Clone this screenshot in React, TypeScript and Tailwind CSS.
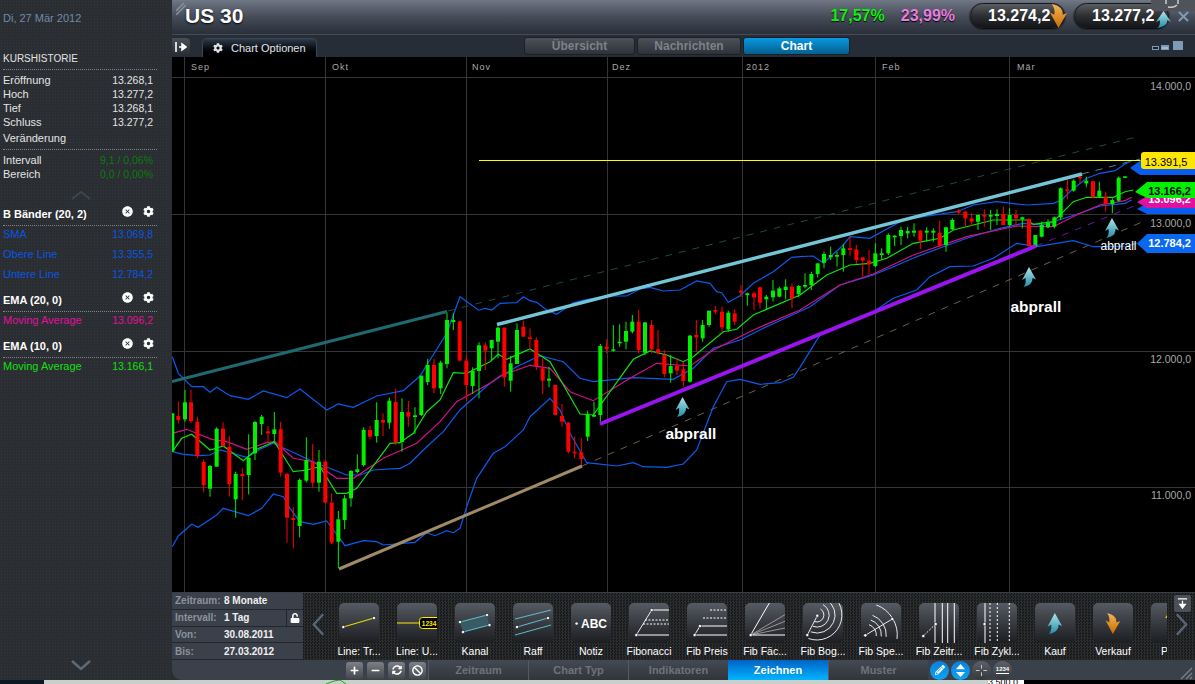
import React from "react";
import { FaBan, FaCog, FaPencilAlt, FaPlus, FaMinus, FaSyncAlt, FaUnlock } from "react-icons/fa";
import { IoCloseCircle } from "react-icons/io5";

type Candle = [number, number, number, number, number, number];

const GREEN = "#00f000";
const RED = "#ff0000";

// values read in zoomed crops: [x, high, bodyTop, bodyBottom, low, up?]
const candlesA: Candle[] = [
  [7, 370, 370, 485, 485, 1], [25, 335, 378, 390, 400, 0], [45, 300, 337, 388, 395, 1], [63, 300, 337, 393, 400, 0],
  [82, 380, 396, 498, 505, 0], [101, 508, 516, 585, 607, 0], [120, 525, 528, 596, 620, 1], [140, 412, 416, 530, 530, 1],
  [159, 397, 416, 468, 470, 0], [178, 438, 470, 582, 620, 0], [197, 545, 552, 628, 683, 1], [217, 535, 552, 558, 630, 0],
  [236, 433, 503, 555, 613, 1], [255, 393, 396, 490, 510, 1], [275, 375, 380, 402, 435, 1], [294, 408, 424, 430, 460, 0],
  [313, 366, 418, 432, 460, 1], [332, 395, 418, 548, 560, 0], [351, 548, 552, 683, 758, 0], [370, 652, 684, 690, 775, 0],
  [389, 565, 570, 708, 742, 1], [409, 442, 510, 572, 577, 1], [428, 462, 516, 578, 592, 0], [447, 480, 515, 578, 605, 1],
  [466, 510, 515, 638, 640, 0], [485, 610, 638, 758, 763, 0], [505, 663, 688, 755, 835, 1], [524, 615, 625, 690, 718, 1],
  [543, 540, 543, 625, 650, 1], [562, 493, 538, 546, 550, 1], [581, 412, 420, 525, 530, 1], [600, 408, 420, 440, 448, 0],
  [620, 337, 390, 438, 458, 1], [639, 370, 390, 398, 438, 0], [658, 323, 332, 398, 416, 1], [677, 296, 336, 458, 465, 0],
  [696, 325, 366, 456, 485, 1], [715, 333, 366, 380, 410, 0], [735, 352, 376, 381, 432, 1], [754, 257, 257, 375, 378, 1],
  [773, 207, 225, 276, 285, 1], [792, 207, 225, 295, 310, 0], [812, 212, 218, 295, 312, 1], [831, 68, 90, 222, 235, 1],
  [850, 70, 90, 96, 120, 1], [869, 92, 94, 212, 212, 0], [889, 195, 212, 285, 332, 0], [908, 232, 243, 288, 312, 1],
  [927, 157, 166, 243, 325, 1], [946, 157, 166, 182, 240, 0],
];
const candlesB: Candle[] = [
  [35, 150, 150, 175, 212, 1], [54, 110, 113, 155, 205, 1], [73, 113, 113, 262, 290, 0], [92, 198, 220, 272, 305, 1],
  [111, 100, 120, 222, 222, 1], [130, 92, 110, 140, 140, 0], [150, 115, 142, 147, 180, 0], [169, 142, 150, 228, 240, 0],
  [188, 205, 235, 272, 312, 0], [207, 230, 266, 272, 292, 1], [226, 285, 285, 375, 375, 0], [246, 342, 378, 395, 410, 0],
  [265, 395, 398, 485, 490, 0], [284, 440, 485, 490, 505, 0], [304, 445, 487, 507, 525, 0], [323, 362, 375, 440, 453, 1],
  [342, 335, 375, 380, 380, 1], [361, 162, 168, 375, 395, 1], [380, 148, 170, 177, 190, 0], [400, 105, 178, 182, 185, 1],
  [419, 103, 155, 160, 170, 1], [438, 95, 123, 155, 178, 1], [457, 75, 95, 125, 130, 1], [476, 60, 95, 180, 190, 0],
  [495, 97, 97, 188, 195, 1], [515, 90, 105, 178, 190, 0], [534, 120, 178, 190, 190, 0], [553, 180, 195, 252, 262, 0],
  [572, 195, 228, 250, 278, 1], [591, 205, 228, 242, 255, 0], [610, 215, 238, 273, 290, 0], [630, 135, 137, 275, 278, 1],
  [649, 90, 135, 142, 185, 0], [668, 90, 105, 145, 155, 1], [687, 62, 62, 105, 110, 1], [706, 48, 60, 65, 72, 0],
  [726, 50, 65, 112, 125, 0], [745, 62, 68, 118, 125, 1], [764, 58, 70, 95, 105, 0], [783, -15, 2, 8, 21, 0],
  [802, 8, 10, 15, 47, 1], [822, 5, 10, 22, 60, 0],
];
const candlesC: Candle[] = [
  [0, 350, 352, 398, 415, 0], [19, 375, 380, 388, 418, 1], [39, 330, 362, 382, 395, 1], [58, 350, 355, 380, 382, 1],
  [77, 328, 350, 360, 388, 1], [96, 340, 350, 385, 415, 0], [116, 345, 348, 372, 382, 1], [135, 310, 345, 350, 355, 1],
  [154, 305, 312, 345, 360, 1], [173, 280, 280, 312, 322, 1], [192, 245, 252, 278, 295, 1], [212, 230, 255, 262, 270, 1],
  [231, 245, 255, 260, 290, 1], [250, 222, 235, 255, 305, 1], [270, 198, 235, 240, 257, 0], [289, 225, 238, 270, 282, 0],
  [308, 262, 262, 272, 318, 0], [327, 240, 272, 283, 312, 0], [346, 220, 250, 288, 292, 1], [365, 235, 250, 255, 268, 1],
  [385, 190, 195, 250, 255, 1], [404, 195, 197, 202, 228, 1], [423, 170, 180, 198, 225, 1], [443, 170, 183, 190, 205, 1],
  [462, 160, 182, 188, 200, 1], [481, 180, 182, 212, 238, 0], [500, 172, 182, 188, 215, 1], [520, 175, 182, 188, 215, 1],
  [539, 152, 188, 228, 230, 0], [558, 170, 172, 225, 245, 1], [577, 145, 150, 178, 180, 1], [596, 117, 122, 128, 132, 0],
  [616, 122, 125, 145, 168, 0], [635, 130, 145, 155, 168, 0], [654, 133, 135, 155, 180, 1], [673, 118, 135, 140, 170, 0],
  [692, 120, 135, 140, 180, 1], [711, 118, 132, 138, 165, 1],
];
const candlesD: Candle[] = [
  [10, 200, 222, 255, 255, 0], [29, 205, 225, 255, 260, 1], [48, 210, 225, 235, 260, 0], [67, 230, 232, 238, 265, 1],
  [87, 235, 237, 318, 320, 0], [106, 285, 285, 318, 322, 1], [125, 245, 255, 290, 292, 1], [144, 238, 248, 262, 265, 1],
  [163, 230, 232, 260, 265, 1], [182, 142, 145, 232, 240, 1], [202, 120, 148, 152, 178, 0], [221, 118, 122, 152, 155, 1],
  [240, 105, 110, 115, 130, 0], [259, 110, 122, 130, 142, 1], [279, 122, 124, 172, 175, 0], [298, 125, 152, 170, 170, 1],
  [317, 155, 170, 192, 215, 0], [337, 175, 180, 192, 220, 1], [356, 110, 113, 182, 185, 1], [375, 109, 109, 113, 113, 1],
];

const toPage = (x0: number, y0: number, list: Candle[]) =>
  list.map(([x, h, t, b, l, up]) => ({ x: x0 + x / 3, h: y0 + h / 3, t: y0 + t / 3, b: y0 + b / 3, l: y0 + l / 3, up }));

const allCandles = [
  ...toPage(170, 290, candlesA),
  ...toPage(480, 290, candlesB),
  ...toPage(760, 170, candlesC),
  ...toPage(1000, 140, candlesD),
];

const seg = (x0: number, y0: number, v: number[]) => {
  const out: string[] = [];
  for (let i = 0; i < v.length; i += 2) out.push(`${(x0 + v[i] / 3).toFixed(1)},${(y0 + v[i + 1] / 3).toFixed(1)}`);
  return out.join(" ");
};

const upperBand = [
  seg(170, 290, [7, 200, 25, 250, 65, 290, 100, 290, 120, 307, 140, 292, 180, 317, 235, 328, 280, 303, 350, 323, 390, 297, 470, 360, 505, 342, 550, 352, 620, 318, 700, 302, 750, 258, 830, 130, 870, 20, 925, 60]),
  seg(480, 225, [0, 255, 15, 250, 35, 255, 60, 235, 110, 233, 130, 215, 150, 227, 170, 232, 200, 255, 230, 268, 280, 233, 320, 224, 380, 213, 440, 213, 480, 192, 510, 187, 550, 198, 600, 195, 650, 168, 690, 175, 710, 200, 725, 203, 745, 232, 780, 212, 820, 175, 880, 140, 935, 97, 960, 95]),
  seg(760, 170, [160, 258, 190, 280, 250, 225, 270, 200, 330, 205, 430, 150, 490, 140, 590, 125, 640, 105, 710, 95, 800, 105, 880, 100]),
  seg(1000, 140, [185, 180, 215, 150, 260, 115, 300, 100, 345, 92, 375, 72, 400, 60]),
].join(" ");

const lowerBand = [
  seg(170, 290, [7, 770, 25, 738, 65, 703, 85, 712, 140, 675, 160, 655, 235, 677, 275, 655, 310, 612, 340, 620, 360, 655, 390, 695, 430, 703, 470, 693, 490, 720, 525, 767, 580, 752, 620, 755, 640, 765, 735, 757, 770, 728, 795, 737, 830, 722, 850, 728, 870, 715, 890, 650, 920, 565]),
  seg(480, 290, [40, 490, 75, 470, 130, 420, 150, 380, 210, 325, 240, 360, 270, 430, 320, 518, 410, 528, 460, 518, 490, 530, 560, 532, 610, 522, 650, 480, 700, 350, 740, 275, 780, 268, 840, 283, 900, 278, 940, 262, 960, 232]),
  seg(760, 170, [180, 495, 285, 450, 340, 425, 400, 385, 470, 360, 510, 320, 570, 290, 640, 288, 700, 265, 770, 220, 830, 230, 940, 212]),
  seg(1000, 140, [280, 320, 330, 320, 380, 318, 410, 310]),
].join(" ");

const smaLine = [
  seg(170, 290, [7, 485, 40, 493, 90, 497, 120, 495, 150, 480, 230, 502, 270, 478, 310, 460, 380, 492, 430, 515, 530, 555, 570, 555, 610, 540, 690, 535, 720, 520, 770, 470, 820, 425, 870, 360, 960, 280]),
  seg(480, 290, [60, 260, 110, 230, 180, 197, 250, 215, 300, 265, 340, 275, 460, 263, 580, 268, 640, 235, 700, 175, 780, 150, 850, 115]),
  seg(760, 170, [150, 410, 240, 345, 340, 315, 400, 290, 470, 260, 550, 230, 620, 205, 720, 175, 790, 160, 850, 165, 880, 155, 960, 130]),
  seg(1000, 140, [300, 198, 375, 190, 395, 180]),
].join(" ");

const ema20 = [
  seg(170, 290, [7, 430, 50, 418, 125, 448, 170, 455, 230, 478, 290, 458, 315, 455, 370, 505, 430, 515, 500, 565, 550, 565, 640, 505, 740, 460, 810, 395, 860, 335, 960, 280]),
  seg(480, 290, [60, 258, 150, 226, 210, 235, 270, 305, 340, 332, 450, 265, 530, 220, 630, 228, 700, 180, 820, 120, 960, 60]),
  seg(760, 170, [240, 345, 340, 312, 460, 255, 620, 200, 770, 168, 850, 170, 880, 170, 960, 130]),
  seg(1000, 140, [300, 195, 375, 182, 395, 172]),
].join(" ");

const ema10 = [
  seg(170, 290, [7, 485, 35, 445, 65, 433, 120, 480, 160, 468, 220, 512, 260, 478, 313, 455, 370, 545, 410, 540, 450, 530, 500, 610, 530, 610, 560, 595, 660, 460, 690, 458, 730, 430, 770, 365, 810, 330, 850, 248, 890, 250, 960, 215]),
  seg(480, 290, [55, 193, 80, 208, 150, 177, 210, 215, 300, 372, 340, 375, 460, 208, 510, 183, 560, 195, 610, 215, 640, 200, 730, 125, 770, 118, 820, 75, 960, 15]),
  seg(760, 170, [120, 375, 200, 315, 270, 285, 330, 280, 380, 265, 460, 220, 540, 205, 580, 180, 700, 150, 800, 150, 820, 163, 880, 155]),
  seg(1000, 140, [220, 185, 260, 172, 340, 172, 375, 155, 400, 150]),
].join(" ");

const ARROW_UP = "M7 0 L14 12.5 L10.5 11 Q11 18 1.5 20 Q4.5 16 3.5 11 L0 13 Z";
const ARROW_DOWN = "M7 20 L14 7.5 L10.5 9 Q11 2 1.5 0 Q4.5 4 3.5 9 L0 7 Z";

function ChartGrid() {
  return (
    <g stroke="#353535" strokeWidth="1">
      {[184.5, 325.5, 466.5, 607.5, 742.5, 875.5, 1009.5].map((x) => (
        <line key={x} x1={x} y1="57" x2={x} y2="592" />
      ))}
      {[77.5, 214.5, 351.5, 487.5].map((y) => (
        <line key={y} x1="172" y1={y} x2="1195" y2={y} />
      ))}
    </g>
  );
}

function Chart() {
  return (
    <svg viewBox="172 57 1023 535" className="block w-[1023px] h-[535px] bg-black">
      <defs>
        <linearGradient id="tealFill" x1="0" y1="0" x2="0" y2="1">
          <stop offset="0" stopColor="#b4e2ea" />
          <stop offset="1" stopColor="#1f8ea8" />
        </linearGradient>
        <linearGradient id="orangeFill" x1="0" y1="0" x2="0" y2="1">
          <stop offset="0" stopColor="#f6b654" />
          <stop offset="1" stopColor="#c96a00" />
        </linearGradient>
      </defs>
      <ChartGrid />
      <g fontSize="9" fill="#a8a8a8" letterSpacing="1">
        <text x="191" y="70">Sep</text>
        <text x="332" y="70">Okt</text>
        <text x="472" y="70">Nov</text>
        <text x="612" y="70">Dez</text>
        <text x="746" y="70">2012</text>
        <text x="882" y="70">Feb</text>
        <text x="1017" y="70">Mär</text>
      </g>

      {/* dashed channel extensions */}
      <g strokeWidth="1" strokeDasharray="7 7" fill="none">
        <line x1="448" y1="311" x2="1140" y2="136" stroke="#1d4a4c" />
        <line x1="1082" y1="174" x2="1140" y2="159" stroke="#4c8a96" />
        <line x1="582" y1="466" x2="1142" y2="222" stroke="#6e604a" />
        <line x1="1036" y1="246" x2="1134" y2="206" stroke="#6a16a8" />
      </g>

      <polyline points={lowerBand} fill="none" stroke="#0a5cf0" strokeWidth="1.2" />
      <polyline points={upperBand} fill="none" stroke="#0a5cf0" strokeWidth="1.2" />
      <polyline points={smaLine} fill="none" stroke="#0a5cf0" strokeWidth="1.2" />
      <polyline points={ema20} fill="none" stroke="#d4108c" strokeWidth="1.2" />
      <polyline points={ema10} fill="none" stroke="#10e010" strokeWidth="1.2" />

      {allCandles.map((c, i) => (
        <g key={i} fill={c.up ? GREEN : RED}>
          <rect x={c.x - 0.5} y={c.h} width="1" height={c.l - c.h} />
          <rect x={c.x - 2} y={c.t} width="4" height={Math.max(c.b - c.t, 1.5)} />
        </g>
      ))}

      {/* drawn trend lines */}
      <line x1="172" y1="381.5" x2="447" y2="311.5" stroke="#1f6a70" strokeWidth="3" />
      <line x1="497" y1="324.5" x2="1082" y2="174" stroke="#74c6d6" strokeWidth="3.4" />
      <line x1="339" y1="569" x2="582" y2="466" stroke="#a08a68" strokeWidth="3" />
      <line x1="600" y1="424" x2="1036" y2="246" stroke="#9a14f0" strokeWidth="4" />
      <line x1="479" y1="160.5" x2="1141" y2="160.5" stroke="#ffff00" strokeWidth="1" />

      {/* rebound markers */}
      <path d={ARROW_UP} transform="translate(675.5 397)" fill="url(#tealFill)" />
      <path d={ARROW_UP} transform="translate(1022 267)" fill="url(#tealFill)" />
      <path d={ARROW_UP} transform="translate(1105 218)" fill="url(#tealFill)" />
      <g fill="#fff" fontSize="15.5" fontWeight="700">
        <text x="665.5" y="438.5">abprall</text>
        <text x="1010.5" y="312">abprall</text>
      </g>
      <text x="1100.5" y="249.5" fill="#fff" fontSize="12">abprall</text>

      {/* price axis */}
      <g fontSize="10.5" fill="#a8a8a8" textAnchor="end">
        <text x="1191" y="90">14.000,0</text>
        <text x="1191" y="226.5">13.000,0</text>
        <text x="1191" y="363">12.000,0</text>
        <text x="1191" y="499">11.000,0</text>
      </g>

      {/* price tags */}
      <polygon points="1130,168 1141,160 1195,160 1195,175 1140,175" fill="#0a5cf0" />
      <polygon points="1137,209 1147,203 1195,203 1195,214 1147,214" fill="#0a5cf0" />
      <polygon points="1137,202 1147,196 1195,196 1195,208 1147,208" fill="#e010a0" />
      <text x="1191" y="203" fontSize="11" fontWeight="700" fill="#fff" textAnchor="end">13.096,2</text>
      <polygon points="1135,192 1147,182 1195,182 1195,198 1147,198" fill="#00f000" />
      <text x="1191" y="194.5" fontSize="11" fontWeight="700" fill="#000" textAnchor="end">13.166,2</text>
      <rect x="1141" y="152" width="56" height="17" rx="3" fill="#ffe600" />
      <text x="1187.5" y="165.5" fontSize="11" fill="#000" textAnchor="end">13.391,5</text>
      <polygon points="1137,243.5 1147,234 1195,234 1195,253 1147,253" fill="#0a68f0" />
      <text x="1191" y="246.5" fontSize="11" fontWeight="700" fill="#fff" textAnchor="end">12.784,2</text>
    </svg>
  );
}

function Dots() {
  return <div className="w-[154px] border-t border-dotted border-[#80858c]" />;
}

function Row({ label, value, color = "text-[#e4e4e4]", valueColor, className = "" }: { label: string; value?: string; color?: string; valueColor?: string; className?: string }) {
  return (
    <div className={`flex justify-between w-[150px] h-[14px] leading-[14px] text-[11px] ${color} ${className}`}>
      <span>{label}</span>
      {value && <span className={`text-[10.5px] ${valueColor || ""}`}>{value}</span>}
    </div>
  );
}

function IndicatorHead({ title, className = "" }: { title: string; className?: string }) {
  return (
    <div className={`flex items-center w-[151px] h-[14px] leading-[14px] text-[11px] font-bold text-white ${className}`}>
      <span>{title}</span>
      <span className="ml-auto flex items-center gap-[9px] -translate-y-[3px]">
        <IoCloseCircle className="w-[13px] h-[13px] text-white" />
        <FaCog className="w-[11px] h-[11px] text-white" />
      </span>
    </div>
  );
}

function Sidebar() {
  return (
    <aside className="w-[172px] h-[680px] flex-none flex flex-col pl-[3px] pt-[11px] bg-[#2a2d32] bg-[radial-gradient(#34383e_1px,transparent_1px)] bg-[length:3px_3px]">
      <div className="h-[14px] leading-[14px] text-[11px] text-[#6f8ba8]">Di, 27 Mär 2012</div>
      <div className="h-[14px] leading-[14px] mt-[27px] text-[10px] text-[#e4e4e4]">KURSHISTORIE</div>
      <div className="mt-[3px]"><Dots /></div>
      <Row className="mt-[3px]" label="Eröffnung" value="13.268,1" />
      <Row label="Hoch" value="13.277,2" />
      <Row label="Tief" value="13.268,1" />
      <Row label="Schluss" value="13.277,2" />
      <Row className="mt-[2px]" label="Veränderung" />
      <div className="mt-[4px]"><Dots /></div>
      <Row className="mt-[3px]" label="Intervall" value="9,1 / 0,06%" valueColor="text-[#0c7a10]" />
      <Row label="Bereich" value="0,0 / 0,00%" valueColor="text-[#0c7a10]" />
      <svg viewBox="0 0 20 10" className="w-[20px] h-[10px] mt-[9px] ml-[68px]">
        <path d="M1 9 L10 2 L19 9" fill="none" stroke="#3d4550" strokeWidth="2" />
      </svg>
      <IndicatorHead className="mt-[7px]" title="B Bänder (20, 2)" />
      <div className="mt-[4px]"><Dots /></div>
      <Row className="mt-[1px]" color="text-[#0a56e0]" label="SMA" value="13.069,8" />
      <Row className="mt-[6px]" color="text-[#0a56e0]" label="Obere Line" value="13.355,5" />
      <Row className="mt-[6px]" color="text-[#0a56e0]" label="Untere Line" value="12.784,2" />
      <IndicatorHead className="mt-[12px]" title="EMA (20, 0)" />
      <div className="mt-[4px]"><Dots /></div>
      <Row className="mt-[1px]" color="text-[#e0109c]" label="Moving Average" value="13.096,2" />
      <IndicatorHead className="mt-[12px]" title="EMA (10, 0)" />
      <div className="mt-[4px]"><Dots /></div>
      <Row className="mt-[1px]" color="text-[#10e010]" label="Moving Average" value="13.166,1" />
      <svg viewBox="0 0 20 12" className="w-[20px] h-[12px] mt-auto mb-[9px] ml-[68px]">
        <path d="M1 2 L10 10 L19 2" fill="none" stroke="#5d6b7a" strokeWidth="2.4" />
      </svg>
    </aside>
  );
}

function QuotePill({ value, arrow, fill, arrowClass, className }: { value: string; arrow: string; fill: string; arrowClass: string; className: string }) {
  return (
    <div className={`relative h-[25px] rounded-full border border-[#15171a] bg-gradient-to-b from-[#5a5d62] via-[#2e3033] to-[#141518] flex items-center text-white font-bold text-[16px] shadow-[0_1px_2px_#000] ${className}`}>
      <span className="ml-[17px]">{value}</span>
      <svg viewBox="0 0 14 20" preserveAspectRatio="none" className={`absolute ${arrowClass}`}>
        <path d={arrow} fill={fill} />
      </svg>
    </div>
  );
}

function Header() {
  return (
    <header className="relative h-[35px] flex-none flex items-center pb-[3px] border-b border-[#454c58] bg-gradient-to-b from-[#707785] via-[#454b57] to-[#2a303a]">
      <svg viewBox="0 0 10 12" className="absolute left-[4px] top-[3px] w-[10px] h-[12px]">
        <path d="M0 8 L8 0 M0 12 L10 2" stroke="#8b93a2" strokeWidth="1.4" />
      </svg>
      <span className="ml-[13px] text-[21px] font-bold text-white [text-shadow:0_1px_2px_#000]">US 30</span>
      <div className="ml-auto flex items-center">
        <span className="text-[16px] font-bold text-[#12f012] [text-shadow:0_1px_1px_#000]">17,57%</span>
        <span className="ml-[16px] text-[16px] font-bold text-[#e87fe0] [text-shadow:0_1px_1px_#000]">23,99%</span>
        <QuotePill className="ml-[15px] w-[95px]" value="13.274,2" arrow={ARROW_DOWN} fill="url(#orangeFill)" arrowClass="right-[-3px] top-[0px] w-[17px] h-[24px]" />
        <QuotePill className="ml-[9px] w-[95px]" value="13.277,2" arrow={ARROW_UP} fill="url(#tealFill)" arrowClass="right-[-3px] top-[7px] w-[15px] h-[17px]" />
        <svg viewBox="0 0 12 12" className="ml-[9px] mr-[6px] w-[11px] h-[11px] translate-y-[1px]">
          <path d="M1 1 L11 11 M11 1 L1 11" stroke="#7f9bb4" strokeWidth="2.2" />
        </svg>
      </div>
      <div className="absolute right-0 top-0 w-[44px] h-[11px] bg-[#50545a] rounded-bl-sm flex items-start justify-center">
        <svg viewBox="0 0 20 8" className="w-[20px] h-[8px]">
          <path d="M3 0 V4 M15 0 V4 M5 7 Q11 8 14 5" fill="none" stroke="#c4c8cc" strokeWidth="1.6" />
        </svg>
      </div>
    </header>
  );
}

function TopTab({ label, active, className = "" }: { label: string; active?: boolean; className?: string }) {
  return (
    <div className={`h-[18px] rounded-[3px] border border-[#1c2026] flex items-center justify-center text-[12px] font-bold ${active ? "bg-gradient-to-b from-[#0a98e0] to-[#04608f] text-white" : "bg-gradient-to-b from-[#4c515a] to-[#2e3238] text-[#7c828a]"} ${className}`}>
      {label}
    </div>
  );
}

function TabRow() {
  return (
    <div className="h-[22px] flex-none flex items-start bg-[#272d37]">
      <div className="mt-[3px] w-[18px] h-[17px] rounded-r-[4px] bg-gradient-to-b from-[#4a4e56] to-[#2a2d33] flex items-center justify-center">
        <svg viewBox="0 0 12 10" className="w-[12px] h-[10px]">
          <path d="M1 0 V10 M4 5 H8 M7 2 L11 5 L7 8 Z" stroke="#fff" strokeWidth="1.6" fill="#fff" />
        </svg>
      </div>
      <div className="ml-[12px] mt-[3px] w-[115px] h-[19px] rounded-t-[5px] border-t border-x border-[#3a4656] bg-gradient-to-b from-[#2e3a4a] to-black flex items-center text-[11px] text-[#e4e4e4]">
        <FaCog className="ml-[10px] mr-[8px] w-[10px] h-[10px]" />
        Chart Optionen
      </div>
      <div className="ml-[207px] mt-[2px] flex gap-[2px]">
        <TopTab className="w-[111px]" label="Übersicht" />
        <TopTab className="w-[104px]" label="Nachrichten" />
        <TopTab className="w-[107px]" label="Chart" active />
      </div>
      <div className="ml-auto mr-[12px] mt-[5px] h-[10px] flex items-end gap-[2px]">
        <div className="w-[7px] h-[4px] border border-[#7a9ab8] bg-[#1c2028]" />
        <div className="w-[8px] h-[5px] border-t-2 border-x border-b border-[#7a9ab8] bg-[#a0bcd4]" />
        <div className="ml-[2px] w-[10px] h-[9px] border-t-2 border-x border-b border-[#7a9ab8] bg-[#7f9ab4]" />
      </div>
    </div>
  );
}

function InfoRow({ label, value, children }: { label: string; value: string; children?: React.ReactNode }) {
  return (
    <div className="flex-1 flex items-center border-b border-[#23272c] bg-[#3b414b] pl-[3px] text-[10px] font-bold">
      <span className="w-[49px] text-[#8a929c]">{label}</span>
      <span className="text-[#f0f0f0]">{value}</span>
      {children}
    </div>
  );
}

const dot = (cx: number, cy: number) => <circle cx={cx} cy={cy} r="1.6" fill="#fff" stroke="#111" strokeWidth="0.5" />;

const toolIcons: Record<string, React.ReactNode> = {
  line: <>
    <line x1="4.3" y1="24" x2="35" y2="15" stroke="#e6d800" strokeWidth="1.2" />
    {dot(4.3, 24)}{dot(35, 15)}
  </>,
  horiz: <>
    <line x1="0" y1="20" x2="22" y2="20" stroke="#ffea00" strokeWidth="1.2" />
    <rect x="22.5" y="14.5" width="22" height="11" rx="3" fill="#000" stroke="#ffea00" strokeWidth="1" />
    <text x="24.8" y="22.5" fontSize="6.5" fontWeight="700" fill="#ffea00">1234</text>
  </>,
  channel: <>
    <polygon points="5,19 32,12 34.5,22 8,29" fill="#3a5a66" />
    <line x1="5" y1="19" x2="32" y2="12" stroke="#5bbfd0" strokeWidth="1" />
    <line x1="8" y1="29" x2="34.5" y2="22" stroke="#5bbfd0" strokeWidth="1" />
    {dot(5, 19)}{dot(32, 12)}{dot(34.5, 22)}{dot(8, 29)}
  </>,
  raff: <>
    <line x1="2" y1="16" x2="38" y2="7" stroke="#5bbfd0" strokeWidth="1" />
    <line x1="4" y1="24" x2="35" y2="15" stroke="#5bbfd0" strokeWidth="1" />
    <line x1="2" y1="32" x2="38" y2="22" stroke="#5bbfd0" strokeWidth="1" />
    {dot(4, 24)}{dot(35, 15)}
  </>,
  note: <>
    {dot(5.6, 20.5)}
    <text x="10" y="25" fontSize="12" fontWeight="700" fill="#fff">ABC</text>
  </>,
  fib: <>
    <line x1="22.7" y1="7" x2="7.3" y2="32" stroke="#fff" strokeWidth="0.9" />
    <line x1="22.7" y1="7" x2="40" y2="7" stroke="#fff" strokeWidth="1" />
    <line x1="16" y1="17" x2="40" y2="17" stroke="#fff" strokeDasharray="2 1.5" />
    <line x1="14" y1="21" x2="40" y2="21" stroke="#fff" strokeDasharray="2 1.5" />
    <line x1="7.3" y1="32" x2="40" y2="32" stroke="#fff" strokeWidth="1" />
    {dot(22.7, 7)}{dot(7.3, 32)}
  </>,
  fibPrice: <>
    <line x1="13" y1="23" x2="7.6" y2="32" stroke="#fff" strokeWidth="0.9" />
    <line x1="23" y1="7" x2="40" y2="7" stroke="#fff" strokeDasharray="2 1.5" />
    <line x1="16" y1="15" x2="40" y2="15" stroke="#fff" strokeDasharray="2 1.5" />
    <line x1="13" y1="23" x2="40" y2="23" stroke="#fff" strokeWidth="1" />
    <line x1="7.6" y1="32" x2="40" y2="32" stroke="#fff" strokeWidth="1" />
    {dot(13, 23)}{dot(7.6, 32)}
  </>,
  fibFan: <>
    <line x1="5.7" y1="32" x2="24.3" y2="0" stroke="#fff" strokeWidth="1" />
    <line x1="5.7" y1="32" x2="40" y2="11.7" stroke="#999" strokeWidth="1" />
    <line x1="5.7" y1="32" x2="40" y2="18.3" stroke="#999" strokeWidth="1" />
    <line x1="5.7" y1="32" x2="40" y2="25" stroke="#999" strokeWidth="1" />
    <line x1="5.7" y1="32" x2="40" y2="32" stroke="#fff" strokeWidth="1" />
    {dot(5.7, 32)}
  </>,
  fibArc: <>
    <g fill="none" stroke="#fff" strokeWidth="0.9">
      <path d="M17.5 6 A7 7 0 0 1 11.6 18.6" />
      <path d="M20 1.6 A12 12 0 0 1 9.9 23.3" />
      <path d="M23 -3.6 A18 18 0 0 1 7.8 28.9" />
      <path d="M26.5 -9.6 A25 25 0 0 1 5.4 35.5" />
    </g>
    <line x1="14.3" y1="12.7" x2="4.3" y2="32" stroke="#fff" strokeWidth="0.9" />
    {dot(14.3, 12.7)}{dot(4.3, 32)}
  </>,
  fibSpeed: <>
    <g fill="none" stroke="#fff" strokeWidth="0.9">
      <path d="M8 21.7 A11 11 0 0 1 15.3 33" />
      <path d="M9.8 17 A16 16 0 0 1 20.3 33.4" />
      <path d="M11.5 12.3 A21 21 0 0 1 25.2 33.8" />
      <path d="M15.2 1.9 A32 32 0 0 1 36 36" />
    </g>
    <line x1="31.3" y1="16" x2="4.3" y2="32.3" stroke="#fff" strokeWidth="0.9" />
    {dot(31.3, 16)}{dot(4.3, 32.3)}
  </>,
  fibTime: <>
    {[16, 23.3, 28.7, 35.3].map((x) => <line key={x} x1={x} y1="0" x2={x} y2="40" stroke="#fff" strokeWidth="1" />)}
    <line x1="16.7" y1="21" x2="4.3" y2="33" stroke="#fff" strokeWidth="0.9" strokeDasharray="2 1.5" />
    {dot(16.7, 21)}{dot(4.3, 33)}
  </>,
  fibCycle: <>
    <line x1="8" y1="0" x2="8" y2="40" stroke="#fff" strokeWidth="1" />
    {[13, 20.3, 32.3].map((x) => <line key={x} x1={x} y1="0" x2={x} y2="40" stroke="#fff" strokeDasharray="2 2" />)}
    {dot(7.5, 21)}
  </>,
  buy: <path d={ARROW_UP} transform="translate(12.5 10) scale(1.05)" fill="url(#tealFill)" />,
  sell: <path d={ARROW_DOWN} transform="translate(12.5 10) scale(1.05)" fill="url(#orangeFill)" />,
  more: <polygon points="14,15 17,10 20,15" fill="#e6c800" />,
};

const tools = [
  ["line", "Line: Tr..."], ["horiz", "Line: U..."], ["channel", "Kanal"], ["raff", "Raff"], ["note", "Notiz"],
  ["fib", "Fibonacci"], ["fibPrice", "Fib Preis"], ["fibFan", "Fib Fäc..."], ["fibArc", "Fib Bog..."], ["fibSpeed", "Fib Spe..."],
  ["fibTime", "Fib Zeitr..."], ["fibCycle", "Fib Zykl..."], ["buy", "Kauf"], ["sell", "Verkauf"], ["more", "P"],
];

function ToolTile({ icon, label }: { icon: string; label: string }) {
  return (
    <div className="w-[40px] flex-none flex flex-col items-center">
      <div className="w-[40px] h-[40px] rounded-[5px] bg-gradient-to-b from-[#565a62] via-[#383b41] to-[#1c1e22] overflow-hidden">
        <svg viewBox="0 0 40 40" className="w-[40px] h-[40px]">{toolIcons[icon]}</svg>
      </div>
      <div className={`mt-[1px] h-[14px] leading-[14px] text-[10.5px] text-white whitespace-nowrap ${icon === "more" ? "self-start ml-[10px]" : ""}`}>{label}</div>
    </div>
  );
}

function SquareBtn({ children }: { children: React.ReactNode }) {
  return (
    <div className="w-[17px] h-[17px] rounded-[3px] bg-gradient-to-b from-[#7d8186] to-[#43474d] flex items-center justify-center text-white">
      {children}
    </div>
  );
}

function RoundBtn({ blue, children }: { blue?: boolean; children: React.ReactNode }) {
  return (
    <div className={`w-[19px] h-[19px] rounded-full flex items-center justify-center text-white ${blue ? "bg-gradient-to-b from-[#0a80d8] to-[#10a4f4]" : "bg-gradient-to-b from-[#5e6268] to-[#34373c]"}`}>
      {children}
    </div>
  );
}

function BottomTab({ label, active }: { label: string; active?: boolean }) {
  return (
    <div className={`w-[100px] h-[20px] flex items-center justify-center text-[11px] font-bold ${active ? "bg-gradient-to-b from-[#0062c4] to-[#00b4ff] text-white" : "border-l border-[#555a62] bg-gradient-to-b from-[#444a53] to-[#31353b] text-[#6d737b]"}`}>
      {label}
    </div>
  );
}

function BottomPanel() {
  return (
    <div className="flex-none h-[88px] flex flex-col bg-[#2a2d32]">
      <div className="h-[68px] flex border-t border-[#3a3e44]">
        <div className="w-[131px] flex-none flex flex-col">
          <InfoRow label="Zeitraum:" value="8 Monate" />
          <InfoRow label="Intervall:" value="1 Tag">
            <div className="ml-auto w-[17px] self-stretch border-l border-[#23272c] flex items-center justify-center">
              <FaUnlock className="w-[10px] h-[10px] text-white" />
            </div>
          </InfoRow>
          <InfoRow label="Von:" value="30.08.2011" />
          <InfoRow label="Bis:" value="27.03.2012" />
        </div>
        <div className="relative flex-1 flex bg-[#202225] bg-[repeating-conic-gradient(#2c2d2f_0_25%,#18191b_0_50%)] bg-[length:3px_3px]">
          <div className="w-[30px] flex-none flex items-center justify-center">
            <svg viewBox="0 0 14 26" className="w-[13px] h-[25px] -translate-y-[2px]">
              <path d="M12 2 L2 13 L12 24" fill="none" stroke="#56677c" strokeWidth="2.6" />
            </svg>
          </div>
          <div className="w-[834px] flex-none pt-[10px] pl-[6px] flex gap-[18px] overflow-hidden">
            {tools.map(([icon, label]) => <ToolTile key={icon} icon={icon} label={label} />)}
          </div>
          <div className="flex-1 flex items-center justify-center">
            <svg viewBox="0 0 14 26" className="w-[13px] h-[25px] -translate-y-[2px]">
              <path d="M2 2 L12 13 L2 24" fill="none" stroke="#56677c" strokeWidth="2.6" />
            </svg>
          </div>
          <div className="absolute right-[4px] top-[2px] w-[17px] h-[17px] rounded-[2px] bg-[#4c5056] flex items-center justify-center">
            <svg viewBox="0 0 12 12" className="w-[11px] h-[11px]">
              <path d="M1 1 H11 M6 3 V8 M3 7 L6 11 L9 7 Z" stroke="#fff" strokeWidth="1.4" fill="#fff" />
            </svg>
          </div>
        </div>
      </div>
      <div className="h-[20px] flex bg-[#3b414b] rounded-bl-[10px]">
        <div className="w-[174px] flex-none" />
        <div className="w-[82px] flex-none flex items-center gap-[4px]">
          <SquareBtn><FaPlus className="w-[9px] h-[9px]" /></SquareBtn>
          <SquareBtn><FaMinus className="w-[9px] h-[9px]" /></SquareBtn>
          <SquareBtn><FaSyncAlt className="w-[10px] h-[10px]" /></SquareBtn>
          <SquareBtn><FaBan className="w-[11px] h-[11px]" /></SquareBtn>
        </div>
        <BottomTab label="Zeitraum" />
        <BottomTab label="Chart Typ" />
        <BottomTab label="Indikatoren" />
        <BottomTab label="Zeichnen" active />
        <BottomTab label="Muster" />
        <div className="ml-[2px] flex items-center gap-[2px]">
          <RoundBtn blue><FaPencilAlt className="w-[10px] h-[10px]" /></RoundBtn>
          <RoundBtn blue>
            <svg viewBox="0 0 12 14" className="w-[11px] h-[13px]"><path d="M6 0 L11 5.5 H1 Z M6 14 L11 8.5 H1 Z" fill="#fff" /></svg>
          </RoundBtn>
          <RoundBtn>
            <svg viewBox="0 0 14 14" className="w-[13px] h-[13px]"><path d="M7 1 V5 M7 9 V13 M1 7 H5 M9 7 H13" stroke="#ccd" strokeWidth="1" /></svg>
          </RoundBtn>
          <RoundBtn>
            <span className="text-[6px] font-bold leading-[7px] border-b border-white">1234</span>
          </RoundBtn>
        </div>
        <div className="ml-auto mr-[2px] self-end">
          <svg viewBox="0 0 14 14" className="w-[14px] h-[14px]">
            <path d="M13 2 L2 13 M13 7 L7 13 M13 11 L11 13" stroke="#7a8088" strokeWidth="1.4" />
          </svg>
        </div>
      </div>
    </div>
  );
}

function BackWindow() {
  return (
    <div className="h-[4px] flex flex-none">
      <div className="w-[44px] bg-[#0b1a22]" />
      <div className="w-[944px] bg-[#c9cfca] relative overflow-hidden">
        <svg viewBox="0 0 30 4" className="absolute left-[282px] top-0 w-[30px] h-[4px]">
          <path d="M0 4 L8 1 L14 0 L20 4" fill="none" stroke="#10b010" strokeWidth="1" />
        </svg>
      </div>
      <div className="w-[36px] bg-white leading-[4px] text-[9px] text-black overflow-hidden">3.500,0</div>
      <div className="flex-1 bg-black" />
    </div>
  );
}

export default function App() {
  return (
    <div className="w-[1195px] h-[684px] overflow-hidden flex flex-col font-['Liberation_Sans',sans-serif] bg-black">
      <div className="flex h-[680px]">
        <Sidebar />
        <div className="w-[1023px] flex flex-col">
          <Header />
          <TabRow />
          <Chart />
          <BottomPanel />
        </div>
      </div>
      <BackWindow />
    </div>
  );
}
